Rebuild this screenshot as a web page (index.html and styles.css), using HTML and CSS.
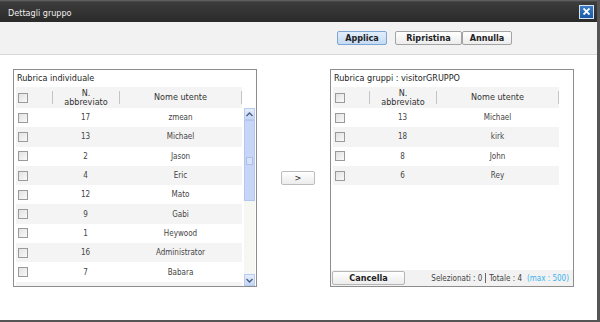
FILE: index.html
```html
<!DOCTYPE html>
<html lang="it">
<head>
  <meta charset="UTF-8">
  <title>Dettagli gruppo</title>
  <link rel="stylesheet" href="styles.css">
</head>
<body>
  <div class="dialog">
    <div class="title-bar">
      <span class="title">Dettagli gruppo</span>
      <span class="close-btn">
        <svg width="7" height="7" viewBox="0 0 7 7"><path d="M0.5 0.5 L6.5 6.5 M6.5 0.5 L0.5 6.5" stroke="#fff" stroke-width="1.8"/></svg>
      </span>
    </div>

    <div class="toolbar">
      <button class="btn btn-primary">Applica</button>
      <button class="btn btn-wide">Ripristina</button>
      <button class="btn">Annulla</button>
    </div>

    <div class="content">
      <!-- left: address book -->
      <div class="panel">
        <div class="panel-title">Rubrica individuale</div>
        <div class="grid-head">
          <div class="col-check"><span class="chk"></span></div>
          <span class="sep"></span>
          <div class="col-num">N.<br>abbreviato</div>
          <span class="sep"></span>
          <div class="col-name">Nome utente</div>
          <span class="sep"></span>
        </div>
        <div class="grid-body">
          <div class="rows">
            <div class="row"><div class="col-check"><span class="chk"></span></div><div class="col-num">17</div><div class="col-name">zmean</div></div>
            <div class="row"><div class="col-check"><span class="chk"></span></div><div class="col-num">13</div><div class="col-name">Michael</div></div>
            <div class="row"><div class="col-check"><span class="chk"></span></div><div class="col-num">2</div><div class="col-name">Jason</div></div>
            <div class="row"><div class="col-check"><span class="chk"></span></div><div class="col-num">4</div><div class="col-name">Eric</div></div>
            <div class="row"><div class="col-check"><span class="chk"></span></div><div class="col-num">12</div><div class="col-name">Mato</div></div>
            <div class="row"><div class="col-check"><span class="chk"></span></div><div class="col-num">9</div><div class="col-name">Gabi</div></div>
            <div class="row"><div class="col-check"><span class="chk"></span></div><div class="col-num">1</div><div class="col-name">Heywood</div></div>
            <div class="row"><div class="col-check"><span class="chk"></span></div><div class="col-num">16</div><div class="col-name">Administrator</div></div>
            <div class="row"><div class="col-check"><span class="chk"></span></div><div class="col-num">7</div><div class="col-name">Babara</div></div>
            <div class="row"></div>
          </div>
          <div class="scrollbar">
            <div class="sb-btn">
              <svg width="7" height="5" viewBox="0 0 7 5"><path d="M0.5 4 L3.5 1 L6.5 4" fill="none" stroke="#4d6185" stroke-width="1.4"/></svg>
            </div>
            <div class="sb-thumb"><span class="sb-grip"></span></div>
            <div class="sb-track"></div>
            <div class="sb-btn">
              <svg width="7" height="5" viewBox="0 0 7 5"><path d="M0.5 1 L3.5 4 L6.5 1" fill="none" stroke="#4d6185" stroke-width="1.4"/></svg>
            </div>
          </div>
        </div>
      </div>

      <div class="middle">
        <button class="btn btn-move">&gt;</button>
      </div>

      <!-- right: group members -->
      <div class="panel">
        <div class="panel-title">Rubrica gruppi : visitorGRUPPO</div>
        <div class="grid-head">
          <div class="col-check"><span class="chk"></span></div>
          <span class="sep"></span>
          <div class="col-num">N.<br>abbreviato</div>
          <span class="sep"></span>
          <div class="col-name">Nome utente</div>
          <span class="sep"></span>
        </div>
        <div class="grid-body">
          <div class="rows">
            <div class="row"><div class="col-check"><span class="chk"></span></div><div class="col-num">13</div><div class="col-name">Michael</div></div>
            <div class="row"><div class="col-check"><span class="chk"></span></div><div class="col-num">18</div><div class="col-name">kirk</div></div>
            <div class="row"><div class="col-check"><span class="chk"></span></div><div class="col-num">8</div><div class="col-name">John</div></div>
            <div class="row"><div class="col-check"><span class="chk"></span></div><div class="col-num">6</div><div class="col-name">Rey</div></div>
          </div>
        </div>
        <div class="panel-footer">
          <button class="btn btn-clear">Cancella</button>
          <span class="status">Selezionati : 0 <span class="bar"></span> Totale : 4 <span class="max">(max : 500)</span></span>
        </div>
      </div>
    </div>
  </div>
</body>
</html>
```

FILE: styles.css
```css
body {
  margin: 0;
  background-color: #fff;
  font-family: "DejaVu Sans Condensed", "DejaVu Sans", sans-serif;
  font-size: 9px;
  color: #222;
  overflow: hidden;
}
.dialog {
  width: 597px;
  height: 320px;
  border-right: 3px solid #555;
  border-bottom: 2px solid #555;
  display: flex;
  flex-direction: column;
}
.title-bar {
  height: 22px;
  background: linear-gradient(#6a6a6a 0, #3c3c3c 2px, #2a2a2a 100%);
  display: flex;
  align-items: center;
  justify-content: space-between;
  padding: 0 3px 0 8px;
}
.title {
  color: #eee;
  font-size: 9px;
  padding-top: 3px;
}
.close-btn {
  width: 13px;
  height: 12px;
  margin-top: 1px;
  border: 1px solid #d6e4f3;
  background: linear-gradient(#3b7cc4, #1a5aa6);
  display: flex;
  align-items: center;
  justify-content: center;
}
.toolbar {
  height: 32px;
  background-color: #f2f2f2;
  border-bottom: 1px solid #d8d8d8;
  display: flex;
  align-items: center;
  justify-content: flex-end;
  padding: 0 85px 0 0;
}
.btn {
  font-family: inherit;
  font-size: 9px;
  font-weight: bold;
  color: #222;
  height: 14px;
  width: 50px;
  padding: 0;
  border: 1px solid #a3a3a3;
  border-radius: 2px;
  background: linear-gradient(#ffffff, #ececec);
}
.btn-primary {
  background: linear-gradient(#e3eefb, #c4dbf4);
  border-color: #7fa5d3;
  margin-right: 8px;
}
.btn-wide {
  width: 67px;
}
.content {
  display: flex;
  align-items: flex-start;
  padding: 14px 0 0 13px;
}
.panel {
  width: 240px;
  height: 216px;
  border: 1px solid #8d8d8d;
  padding-left: 2px;
  display: flex;
  flex-direction: column;
  overflow: hidden;
}
.panel-title {
  height: 17px;
  line-height: 16px;
  padding-left: 1px;
  color: #1e1e1e;
}
.grid-head {
  width: 226px;
  height: 21px;
  background-color: #f4f4f4;
  display: flex;
  align-items: center;
  color: #333;
  line-height: 9px;
}
.col-check {
  width: 36px;
  padding-left: 2px;
  box-sizing: border-box;
  display: flex;
  align-items: center;
}
.col-num {
  width: 66px;
  text-align: center;
}
.col-name {
  width: 121px;
  text-align: center;
}
.sep {
  width: 1px;
  height: 13px;
  background-color: #c4c4c4;
}
.chk {
  width: 8px;
  height: 8px;
  border: 1px solid #9a9a9a;
  background: linear-gradient(135deg, #e2e2e2, #f9f9f9);
}
.grid-body {
  flex: 1;
  display: flex;
  overflow: hidden;
}
.rows {
  width: 226px;
  flex-shrink: 0;
}
.row {
  height: 19.3px;
  display: flex;
  align-items: center;
  font-size: 8px;
  color: #444;
}
.row .col-num {
  width: 67px;
}
.row .col-name {
  width: 123px;
}
.row:nth-child(even) {
  background-color: #f4f4f4;
}
.scrollbar {
  width: 11px;
  margin-left: 2px;
  display: flex;
  flex-direction: column;
  background-color: #f6f6f3;
}
.sb-btn {
  height: 10px;
  border: 1px solid #b9cbf0;
  background: linear-gradient(#e6eefc, #c5d5f5);
  display: flex;
  align-items: center;
  justify-content: center;
  box-sizing: content-box;
  width: 9px;
}
.sb-thumb {
  height: 79px;
  border: 1px solid #b3c6ef;
  background-color: #c7d6f8;
  display: flex;
  align-items: center;
  justify-content: center;
  width: 9px;
}
.sb-grip {
  width: 5px;
  height: 6px;
  border: 1px solid #aebfe6;
  background-color: #d6e1fa;
}
.sb-track {
  flex: 1;
}
.middle {
  width: 73px;
  padding: 102px 0 0 24px;
  box-sizing: border-box;
}
.btn-move {
  width: 34px;
  font-weight: normal;
  border-color: #bcbcbc;
  font-size: 9px;
}
.panel-footer {
  height: 16px;
  margin-left: -2px;
  background-color: #f2f2f2;
  display: flex;
  align-items: center;
  justify-content: space-between;
  padding: 0 4px 0 1px;
}
.btn-clear {
  width: 73px;
  border-color: #b5b5b5;
}
.status {
  font-size: 8px;
  color: #444;
  display: flex;
  align-items: center;
  gap: 3px;
}
.bar {
  width: 1px;
  height: 10px;
  background-color: #666;
}
.max {
  color: #3db2ee;
  margin-left: 2px;
}
```
